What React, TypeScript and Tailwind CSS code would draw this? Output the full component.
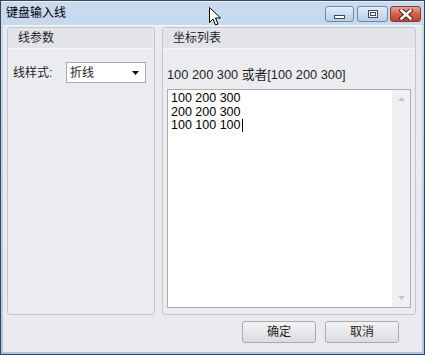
import type { ReactNode } from 'react';

const font = { fontFamily: '"Liberation Sans", "Noto Sans CJK SC", sans-serif' };

function GroupBox({ title, className, children }: { title: string; className: string; children?: ReactNode }) {
  return (
    <section className={`flex flex-col rounded-[3px] border border-[#c3c6cd] bg-[#ebecf0] ${className}`}>
      <header className="h-[21px] shrink-0 rounded-t-[3px] border-b border-[#f4f5f7] bg-[#e2e4e9] pl-[10px] text-[12px] leading-[21px] text-[#1e1e1e]">
        {title}
      </header>
      {children}
    </section>
  );
}

function TitleButton({ kind }: { kind: 'min' | 'max' | 'close' }) {
  if (kind === 'close') {
    return (
      <button className="flex h-[16px] w-[31px] items-center justify-center rounded-[3px] border border-[#8a3b33] bg-gradient-to-b from-[#e9a191] via-[#d3604f] to-[#c4412f]">
        <svg width="14" height="11" viewBox="0 0 14 11">
          <path d="M2.5 1.5 L11.5 9.5 M11.5 1.5 L2.5 9.5" stroke="#4a2420" strokeWidth="4.5" strokeLinecap="square" />
          <path d="M2.5 1.5 L11.5 9.5 M11.5 1.5 L2.5 9.5" stroke="#ffffff" strokeWidth="2.5" strokeLinecap="square" />
        </svg>
      </button>
    );
  }
  return (
    <button
      className={`flex h-[16px] items-center justify-center rounded-[3px] border border-[#7189a8] bg-gradient-to-b from-[#e3ecf6] via-[#ccdcee] to-[#b9cde6] ${
        kind === 'min' ? 'w-[29px]' : 'w-[31px]'
      }`}
    >
      {kind === 'min' ? (
        <span className="mt-[5px] h-[4px] w-[11px] border border-[#3e4a5a] bg-white" />
      ) : (
        <span className="flex h-[8px] w-[10px] items-center justify-center border border-[#3e4a5a] bg-white">
          <span className="h-[4px] w-[6px] border border-[#3e4a5a]" />
        </span>
      )}
    </button>
  );
}

function DialogButton({ label }: { label: string }) {
  return (
    <button className="h-[22px] w-[74px] rounded-[3px] border border-[#a9abaf] bg-gradient-to-b from-[#f3f3f4] to-[#dcdde0] text-[12px] text-[#1e1e1e]">
      {label}
    </button>
  );
}

export default function App() {
  return (
    <div className="relative h-[355px] w-[425px] overflow-hidden bg-white" style={font}>
      <div className="flex h-full w-full flex-col border border-[#3b4654] bg-gradient-to-b from-[#c8daef] to-[#a9c6e8]">
        <div className="flex h-[24px] shrink-0 items-start justify-between border-t border-[#e8f0f9]">
          <span className="pl-[5px] pt-[4px] text-[12px] leading-[14px] text-black">键盘输入线</span>
          <div className="flex gap-[2px] pr-[3px] pt-[4px]">
            <div className="mr-[1px]">
              <TitleButton kind="min" />
            </div>
            <TitleButton kind="max" />
            <TitleButton kind="close" />
          </div>
        </div>

        <div className="mx-[2px] mb-[2px] flex flex-1 flex-col border-t border-[#f3f6fa] bg-[#e9eaee] pl-[4px] pr-[6px] pt-[1px]">
          <div className="flex h-[288px] gap-[7px]">
            <GroupBox title="线参数" className="w-[148px]">
              <div className="flex items-center pl-[5px] pt-[13px] text-[12px] text-[#1e1e1e]">
                <span className="w-[53px]">线样式:</span>
                <div className="flex h-[21px] w-[80px] items-center justify-between border border-[#a8aaae] bg-white pl-[3px] pr-[6px]">
                  <span>折线</span>
                  <svg width="7" height="4" viewBox="0 0 7 4">
                    <path d="M0 0 H7 L3.5 4 Z" fill="#111" />
                  </svg>
                </div>
              </div>
            </GroupBox>

            <GroupBox title="坐标列表" className="flex-1">
              <div className="pl-[4px] pt-[19px] text-[12.8px] leading-[14px] text-[#1e1e1e]">100 200 300 或者[100 200 300]</div>
              <div className="mx-[4px] mt-[7px] flex h-[219px] border border-[#abadb3] bg-white">
                <div className="flex-1 pl-[3px] pt-[2px] text-[12.5px] leading-[13.5px] text-black">
                  <div>100 200 300</div>
                  <div>200 200 300</div>
                  <div className="flex items-center">
                    100 100 100<span className="ml-[1px] h-[13px] w-px bg-black" />
                  </div>
                </div>
                <div className="flex w-[18px] flex-col items-center justify-between bg-[#f0f0f3] py-[7px]">
                  <svg width="7" height="4" viewBox="0 0 7 4">
                    <path d="M0 4 H7 L3.5 0 Z" fill="#c4c6cb" />
                  </svg>
                  <svg width="7" height="4" viewBox="0 0 7 4">
                    <path d="M0 0 H7 L3.5 4 Z" fill="#c4c6cb" />
                  </svg>
                </div>
              </div>
            </GroupBox>
          </div>

          <div className="flex justify-end gap-[9px] pr-[17px] pt-[6px]">
            <DialogButton label="确定" />
            <DialogButton label="取消" />
          </div>
        </div>
      </div>

      <svg className="absolute left-[209px] top-[7px]" width="13" height="20" viewBox="0 0 13 20">
        <path d="M0.5 0.5 V15.5 L4 12 L6.5 18 L9 17 L6.5 11 H11.5 Z" fill="#ffffff" stroke="#000000" strokeWidth="1" />
      </svg>
    </div>
  );
}
